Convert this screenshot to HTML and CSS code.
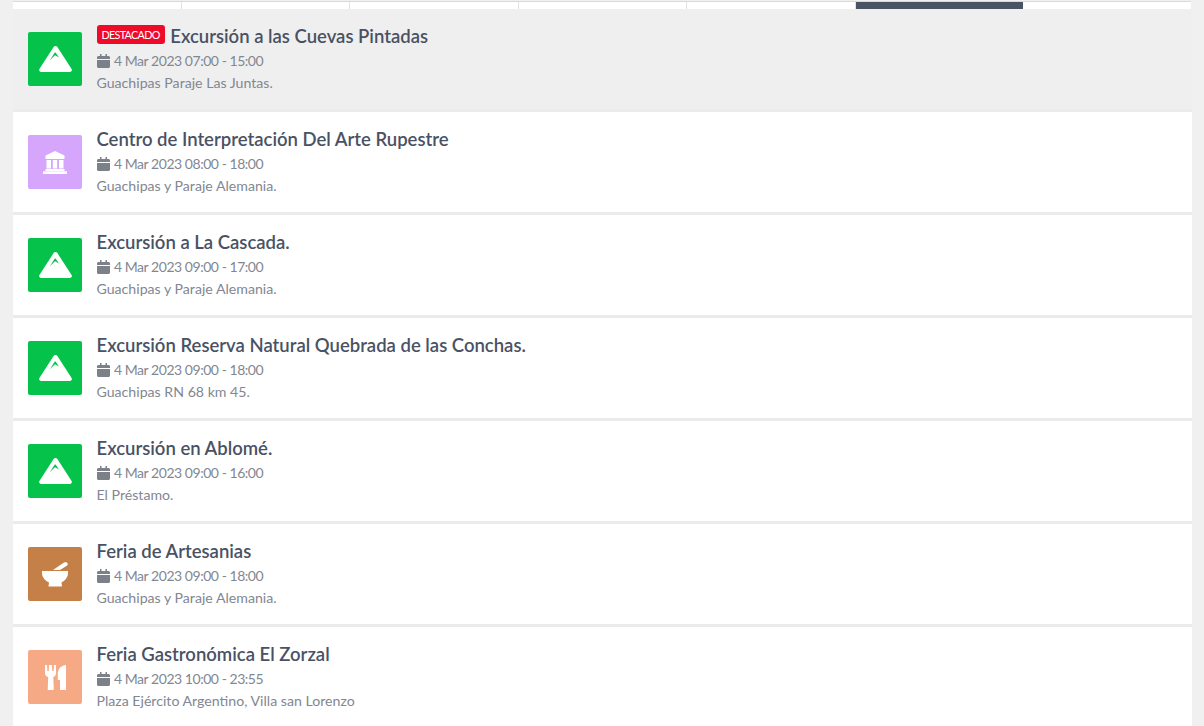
FILE: index.html
```html
<!DOCTYPE html>
<html lang="es">
<head>
  <meta charset="UTF-8">
  <meta name="viewport" content="width=device-width, initial-scale=1.0">
  <title>Agenda</title>
  <link rel="stylesheet" href="styles.css">
</head>
<body>
  <svg class="defs" width="0" height="0">
    <symbol id="ico-mountain" viewBox="0 0 33 26">
      <path d="M16.500 0c.8 0 1.500.4 1.900 1.100L32.600 23c.8 1.300-.1 3-1.700 3H2.100C.5 26-.4 24.300.4 23L14.600 1.100C15 .4 15.700 0 16.500 0z" fill="#fff"/>
      <path class="peak" d="M11 14l4.600-7.200c.3-.4.800-.4 1.100 0l3.300 4.700-4-2.200z"/>
    </symbol>
    <symbol id="ico-bank" viewBox="0 0 24 23">
      <path d="M12 0l9.500 4.500V8h-19V4.500zM3.500 9h4.500v8.500H3.500zM9.800 9h4.400v8.500H9.800zM16 9h4.500v8.500H16zM2.500 18h19v2h-19zM0 20.300h24V23H0z" fill="#fff"/>
    </symbol>
    <symbol id="ico-mortar" viewBox="0 0 26 25">
      <path d="M0 9h26v2c0 4.500-3.500 8-6.500 9.500l.5 4H6.500l.5-4C3.500 19 0 15.500 0 11zM11 8L22 .6c1.300-.8 3-.5 3.600.7.500 1.100-.2 2.200-1.200 2.800L18 8z" fill="#fff"/>
    </symbol>
    <symbol id="ico-cutlery" viewBox="0 0 21 25">
      <path d="M0 0h2l.4 6h1.300L4 0h3l.3 6h1.300L9 0h2v8c0 2.200-1.200 3.600-2.700 4l.5 13H2.700l.5-13C1.200 11.600 0 10.200 0 8zM21 0v25h-6V15h-2.200V9C12.800 4 16 .5 21 0z" fill="#fff"/>
    </symbol>
    <symbol id="ico-calendar" viewBox="0 0 13 14">
      <path d="M3 0h1.500v2h4V0H10v2h1.500c.8 0 1.500.7 1.500 1.500V5H0V3.500C0 2.700.7 2 1.500 2H3zM0 6h13v6.500c0 .8-.7 1.500-1.500 1.500h-10C.7 14 0 13.300 0 12.500z" fill="currentColor"/>
    </symbol>
  </svg>

  <div class="agenda">
    <div class="tabs">
      <div class="tab"></div>
      <div class="tab"></div>
      <div class="tab"></div>
      <div class="tab"></div>
      <div class="tab"></div>
      <div class="tab active"></div>
      <div class="tab"></div>
    </div>

    <ul class="events">
      <li class="event featured">
        <div class="event-icon green"><svg class="mountain"><use href="#ico-mountain"/></svg></div>
        <div class="event-info">
          <h3><span class="badge">DESTACADO</span> Excursión a las Cuevas Pintadas</h3>
          <p class="date"><svg class="cal"><use href="#ico-calendar"/></svg>4 Mar 2023 07:00 - 15:00</p>
          <p class="place">Guachipas Paraje Las Juntas.</p>
        </div>
      </li>
      <li class="event">
        <div class="event-icon purple"><svg class="bank"><use href="#ico-bank"/></svg></div>
        <div class="event-info">
          <h3>Centro de Interpretación Del Arte Rupestre</h3>
          <p class="date"><svg class="cal"><use href="#ico-calendar"/></svg>4 Mar 2023 08:00 - 18:00</p>
          <p class="place">Guachipas y Paraje Alemania.</p>
        </div>
      </li>
      <li class="event">
        <div class="event-icon green"><svg class="mountain"><use href="#ico-mountain"/></svg></div>
        <div class="event-info">
          <h3>Excursión a La Cascada.</h3>
          <p class="date"><svg class="cal"><use href="#ico-calendar"/></svg>4 Mar 2023 09:00 - 17:00</p>
          <p class="place">Guachipas y Paraje Alemania.</p>
        </div>
      </li>
      <li class="event">
        <div class="event-icon green"><svg class="mountain"><use href="#ico-mountain"/></svg></div>
        <div class="event-info">
          <h3>Excursión Reserva Natural Quebrada de las Conchas.</h3>
          <p class="date"><svg class="cal"><use href="#ico-calendar"/></svg>4 Mar 2023 09:00 - 18:00</p>
          <p class="place">Guachipas RN 68 km 45.</p>
        </div>
      </li>
      <li class="event">
        <div class="event-icon green"><svg class="mountain"><use href="#ico-mountain"/></svg></div>
        <div class="event-info">
          <h3>Excursión en Ablomé.</h3>
          <p class="date"><svg class="cal"><use href="#ico-calendar"/></svg>4 Mar 2023 09:00 - 16:00</p>
          <p class="place">El Préstamo.</p>
        </div>
      </li>
      <li class="event">
        <div class="event-icon brown"><svg class="mortar"><use href="#ico-mortar"/></svg></div>
        <div class="event-info">
          <h3>Feria de Artesanias</h3>
          <p class="date"><svg class="cal"><use href="#ico-calendar"/></svg>4 Mar 2023 09:00 - 18:00</p>
          <p class="place">Guachipas y Paraje Alemania.</p>
        </div>
      </li>
      <li class="event">
        <div class="event-icon salmon"><svg class="cutlery"><use href="#ico-cutlery"/></svg></div>
        <div class="event-info">
          <h3>Feria Gastronómica El Zorzal</h3>
          <p class="date"><svg class="cal"><use href="#ico-calendar"/></svg>4 Mar 2023 10:00 - 23:55</p>
          <p class="place">Plaza Ejército Argentino, Villa san Lorenzo</p>
        </div>
      </li>
    </ul>
  </div>
</body>
</html>
```

FILE: styles.css
```css
* {
  margin: 0;
  padding: 0;
  box-sizing: border-box;
}

html, body {
  height: 726px;
  overflow: hidden;
}

body {
  background-color: #f0f0f0;
  color: #495264;
  font-family: Lato, 'Noto Sans', sans-serif;
}

.defs {
  display: block;
  height: 0;
}

.agenda {
  padding: 1px 12px 0 13px;
}

.tabs {
  display: flex;
  height: 8px;
  margin-right: 1px;
  border-top: 1px solid #d9d9d9;
}

.tab {
  flex: 1;
  background-color: #fff;
  border-right: 1px solid #e2e2e2;
}

.tab.active {
  background-color: #4a5364;
  border-right: none;
}

.tab:last-child {
  border-right: none;
}

.events {
  list-style: none;
}

.event {
  display: flex;
  align-items: center;
  gap: 14.500px;
  height: 103px;
  padding: 0 15px;
  background-color: #fff;
  border-bottom: 3px solid #ebebeb;
}

.event.featured {
  background-color: #efefef;
}

.event-icon {
  flex: none;
  width: 54px;
  height: 54px;
  display: flex;
  align-items: center;
  justify-content: center;
  border-radius: 2px;
}

.green { background-color: #05c24a; }
.purple { background-color: #d5a6fb; }
.brown { background-color: #c58048; }
.salmon { background-color: #f5a985; }

.mountain {
  width: 33px;
  height: 26px;
}

.peak {
  fill: #05c24a;
}

.bank {
  width: 24px;
  height: 23px;
}

.mortar {
  width: 26px;
  height: 25px;
}

.cutlery {
  width: 21px;
  height: 25px;
}

.event-info {
  min-width: 0;
}

h3 {
  height: 24px;
  margin-bottom: 2px;
  font-size: 18.500px;
  font-weight: 600;
  line-height: 24px;
  color: #495264;
}

.badge {
  display: inline-block;
  vertical-align: 4px;
  height: 19px;
  padding: 0 5px;
  margin-right: 1px;
  background-color: #ee0a29;
  border-radius: 3px;
  color: #fff;
  font-size: 10.800px;
  font-weight: 400;
  line-height: 19px;
  letter-spacing: -0.7px;
}

.date, .place {
  line-height: 22px;
  color: #828791;
}

.date {
  font-size: 14px;
  letter-spacing: -0.46px;
}

.place {
  font-size: 14.150px;
}

.cal {
  width: 13px;
  height: 14px;
  margin-right: 4.500px;
  vertical-align: -2px;
  color: #7b8089;
}
```
